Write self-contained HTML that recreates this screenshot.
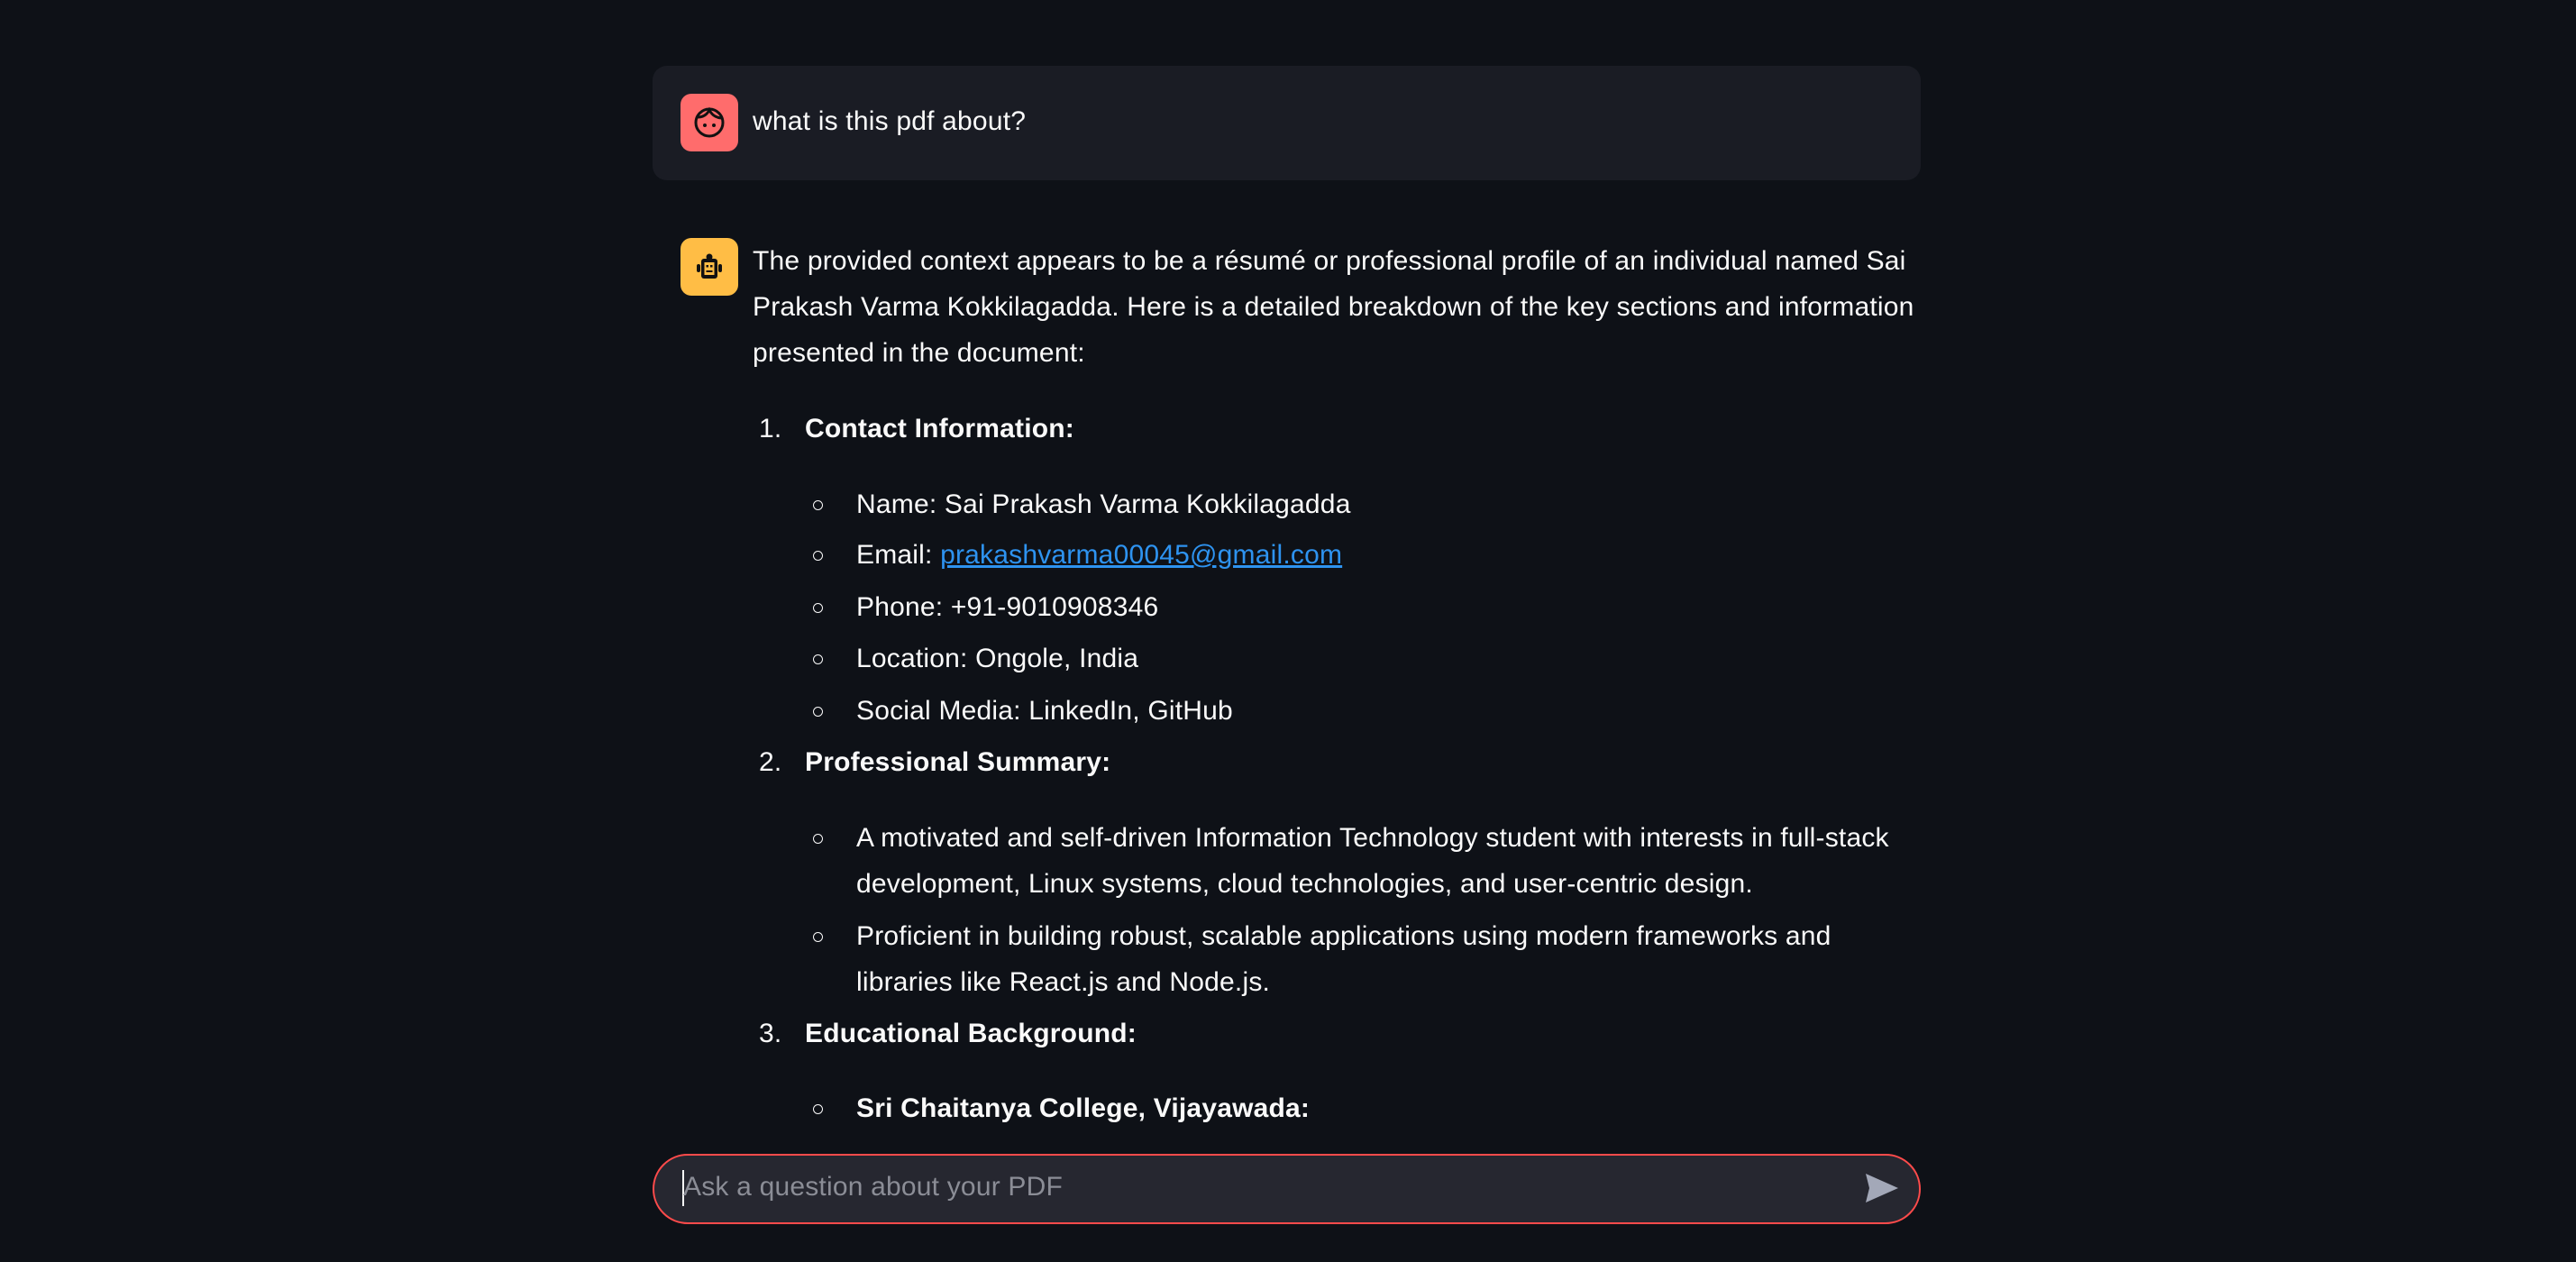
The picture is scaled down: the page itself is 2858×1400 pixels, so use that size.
<!DOCTYPE html>
<html><head><meta charset="utf-8"><style>
html,body{margin:0;padding:0;width:2858px;height:1400px;background:#0e1117;overflow:hidden}
body{position:relative;font-family:"Liberation Sans",sans-serif;color:#fafafa;font-size:30px;letter-spacing:0.2px}
.l{position:absolute;white-space:nowrap;line-height:40px;height:40px}
.b{font-weight:bold}
.dot{position:absolute;width:9px;height:9px;border:1.5px solid #fafafa;border-radius:50%}
a{color:#2e93f0;text-decoration:underline}
</style></head><body>
<div style="position:absolute;left:724px;top:73px;width:1407px;height:127px;background:#1a1c24;border-radius:16px"></div>
<div style="position:absolute;left:755px;top:104px;width:64px;height:64px;background:#ff6c6c;border-radius:12px">
<svg width="64" height="64" viewBox="0 0 64 64"><circle cx="32" cy="32" r="15" fill="none" stroke="#111" stroke-width="3"/><path d="M19 26 Q28 26 32 18 Q36 26 45 27" fill="none" stroke="#111" stroke-width="3"/><circle cx="27" cy="35" r="2" fill="#111"/><circle cx="37" cy="35" r="2" fill="#111"/></svg></div>
<div class="l" style="left:835px;top:115px">what is this pdf about?</div>

<div style="position:absolute;left:755px;top:264px;width:64px;height:64px;background:#ffbd45;border-radius:12px">
<svg width="64" height="64" viewBox="0 0 64 64"><circle cx="32" cy="21" r="3.5" fill="#111"/><rect x="23" y="23" width="18" height="22" rx="3" fill="#111"/><rect x="26.5" y="27" width="11" height="14" fill="#ffbd45"/><rect x="18" y="29" width="4" height="9" rx="2" fill="#111"/><rect x="42" y="29" width="4" height="9" rx="2" fill="#111"/><rect x="28.5" y="30" width="2.5" height="2.5" fill="#111"/><rect x="33" y="30" width="2.5" height="2.5" fill="#111"/><rect x="28.5" y="36" width="7" height="2" fill="#111"/></svg></div>
<div class="l" style="left:835px;top:270px">The provided context appears to be a résumé or professional profile of an individual named Sai</div>
<div class="l" style="left:835px;top:321px">Prakash Varma Kokkilagadda. Here is a detailed breakdown of the key sections and information</div>
<div class="l" style="left:835px;top:372px">presented in the document:</div>

<div class="l" style="left:842px;top:456px">1.</div><div class="l b" style="left:893px;top:456px">Contact Information:</div>
<div class="dot" style="left:902px;top:555px"></div><div class="l" style="left:950px;top:540px">Name: Sai Prakash Varma Kokkilagadda</div>
<div class="dot" style="left:902px;top:611px"></div><div class="l" style="left:950px;top:596px">Email: <a>prakashvarma00045@gmail.com</a></div>
<div class="dot" style="left:902px;top:669px"></div><div class="l" style="left:950px;top:654px">Phone: +91-9010908346</div>
<div class="dot" style="left:902px;top:726px"></div><div class="l" style="left:950px;top:711px">Location: Ongole, India</div>
<div class="dot" style="left:902px;top:784px"></div><div class="l" style="left:950px;top:769px">Social Media: LinkedIn, GitHub</div>
<div class="l" style="left:842px;top:826px">2.</div><div class="l b" style="left:893px;top:826px">Professional Summary:</div>
<div class="dot" style="left:902px;top:925px"></div><div class="l" style="left:950px;top:910px">A motivated and self-driven Information Technology student with interests in full-stack</div>
<div class="l" style="left:950px;top:961px">development, Linux systems, cloud technologies, and user-centric design.</div>
<div class="dot" style="left:902px;top:1034px"></div><div class="l" style="left:950px;top:1019px">Proficient in building robust, scalable applications using modern frameworks and</div>
<div class="l" style="left:950px;top:1070px">libraries like React.js and Node.js.</div>
<div class="l" style="left:842px;top:1127px">3.</div><div class="l b" style="left:893px;top:1127px">Educational Background:</div>
<div class="dot" style="left:902px;top:1225px"></div><div class="l b" style="left:950px;top:1210px">Sri Chaitanya College, Vijayawada:</div>

<div style="position:absolute;left:0;top:1262px;width:2858px;height:138px;background:#0e1117"></div>
<div style="position:absolute;left:724px;top:1280px;width:1403px;height:74px;background:#262730;border:2px solid #ff4b4b;border-radius:40px"></div>
<div style="position:absolute;left:757px;top:1298px;width:2px;height:40px;background:#fafafa"></div>
<div class="l" style="left:758px;top:1297px;color:#8b8d96">Ask a question about your PDF</div>
<svg style="position:absolute;left:2068px;top:1300px" width="40" height="36" viewBox="0 0 40 36"><path d="M2 2 L38 18 L2 34 L6 18 Z M6 18 L22 18" fill="#a3a8b8"/></svg>
</body></html>
